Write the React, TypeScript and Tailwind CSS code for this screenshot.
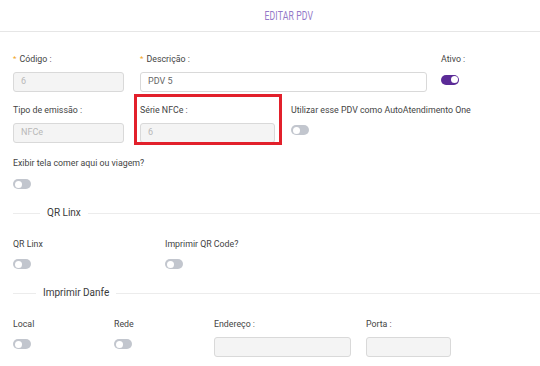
const Toggle = ({ on = false }: { on?: boolean }) => (
  <div
    className={`w-[18px] h-[10px] rounded-full flex items-center px-[1.5px] ${
      on ? "bg-[#5b2b97] justify-end" : "bg-[#c2c6ce] justify-start"
    }`}
  >
    <div className="w-[7px] h-[7px] rounded-full bg-white" />
  </div>
);

const Label = ({ text, required = false }: { text: string; required?: boolean }) => (
  <div className="h-[12px] leading-[12px] text-[8.8px] text-[#444] whitespace-nowrap flex items-center">
    {required && <span className="text-[#f2a51f] text-[8px] mr-[3px]">*</span>}
    <span>{text}</span>
  </div>
);

const Input = ({
  value = "",
  disabled = true,
  width,
}: {
  value?: string;
  disabled?: boolean;
  width: string;
}) => (
  <div
    className={`${width} h-[20px] mt-[7px] rounded-[3px] border border-[#d9d9d9] flex items-center px-[7px] text-[9px] ${
      disabled ? "bg-[#f4f4f4] text-[#b8b8b8]" : "bg-white text-[#666]"
    }`}
  >
    {value}
  </div>
);

const Divider = ({ title, lead }: { title: string; lead: string }) => (
  <div className="h-[12px] flex items-center">
    <div className={`${lead} h-px bg-[#ececec]`} />
    <span className="px-[7px] text-[10px] text-[#3a3a3a] leading-[12px]">{title}</span>
    <div className="flex-1 h-px bg-[#ececec]" />
  </div>
);

export default function App() {
  return (
    <div
      className="w-[540px] h-[366px] bg-white overflow-hidden"
      style={{ fontFamily: "Roboto, 'Liberation Sans', sans-serif" }}
    >
      {/* Cabeçalho */}
      <div className="h-[32px] border-b border-[#e6e6e6] flex items-center justify-center pl-[38px]">
        <span className="inline-block text-[12px] text-[#9479c8] tracking-[0.2px] scale-x-[0.72] origin-center">
          EDITAR PDV
        </span>
      </div>

      <div className="pl-[13px]">
        {/* Linha 1 */}
        <div className="flex mt-[21px]">
          <div className="w-[111px]">
            <Label text="Código :" required />
            <Input value="6" width="w-[111px]" />
          </div>
          <div className="ml-[16px] w-[287px]">
            <Label text="Descrição :" required />
            <Input value="PDV 5" disabled={false} width="w-[287px]" />
          </div>
          <div className="ml-[14px]">
            <Label text="Ativo :" />
            <div className="mt-[9.5px]">
              <Toggle on />
            </div>
          </div>
        </div>

        {/* Linha 2 */}
        <div className="flex mt-[12px]">
          <div className="w-[111px]">
            <Label text="Tipo de emissão :" />
            <Input value="NFCe" width="w-[111px]" />
          </div>
          <div className="ml-[16px] w-[135px] relative">
            <Label text="Série NFCe :" />
            <Input value="6" width="w-[135px]" />
            <div className="absolute left-[-6px] top-[-10px] w-[148px] h-[51px] border-[3px] border-[#e2202b]" />
          </div>
          <div className="ml-[16px]">
            <Label text="Utilizar esse PDV como AutoAtendimento One" />
            <div className="mt-[9px]">
              <Toggle />
            </div>
          </div>
        </div>

        {/* Linha 3 */}
        <div className="mt-[14px]">
          <Label text="Exibir tela comer aqui ou viagem?" />
          <div className="mt-[10px]">
            <Toggle />
          </div>
        </div>

        {/* QR Linx */}
        <div className="mt-[18px]">
          <Divider title="QR Linx" lead="w-[27px]" />
        </div>
        <div className="flex mt-[19px]">
          <div className="w-[152px]">
            <Label text="QR Linx" />
            <div className="mt-[9px]">
              <Toggle />
            </div>
          </div>
          <div>
            <Label text="Imprimir QR Code?" />
            <div className="mt-[9px]">
              <Toggle />
            </div>
          </div>
        </div>

        {/* Imprimir Danfe */}
        <div className="mt-[18px]">
          <Divider title="Imprimir Danfe" lead="w-[23px]" />
        </div>
        <div className="flex mt-[19px]">
          <div className="w-[101px]">
            <Label text="Local" />
            <div className="mt-[9px]">
              <Toggle />
            </div>
          </div>
          <div className="w-[100px]">
            <Label text="Rede" />
            <div className="mt-[9px]">
              <Toggle />
            </div>
          </div>
          <div className="w-[137px]">
            <Label text="Endereço :" />
            <Input width="w-[137px]" />
          </div>
          <div className="ml-[15px] w-[85px]">
            <Label text="Porta :" />
            <Input width="w-[85px]" />
          </div>
        </div>
      </div>
    </div>
  );
}
